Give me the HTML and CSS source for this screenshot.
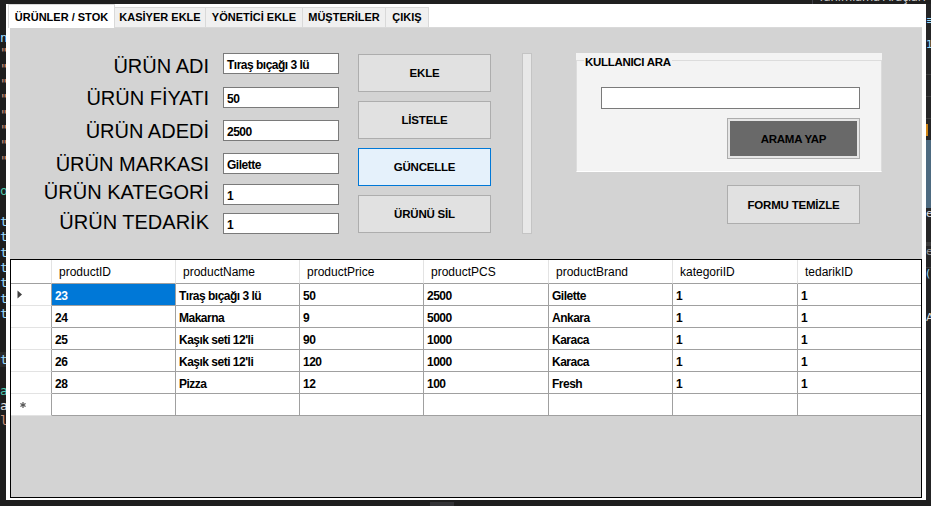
FILE: index.html
```html
<!DOCTYPE html>
<html lang="tr">
<head>
<meta charset="utf-8">
<title>Ürünler / Stok</title>
<link rel="stylesheet" href="styles.css">
</head>
<body>
<div class="screen">
  <div class="topband">
    <div class="tb-gap"></div>
    <div class="tb-sep"></div>
    <span class="vs-title">Tanımlama Araçları</span>
  </div>
  <div class="middle">
    <div class="editor-left">
      <div class="cl c-blue">n</div>
      <div class="cl c-str">"</div>
      <div class="cl c-str">"</div>
      <div class="cl c-str">"</div>
      <div class="cl c-str">"</div>
      <div class="cl c-str">"</div>
      <div class="cl c-str">"</div>
      <div class="cl c-str">"</div>
      <div class="cl c-str">"</div>
      <div class="cl"></div>
      <div class="cl c-teal">o</div>
      <div class="cl"></div>
      <div class="cl c-blue">t</div>
      <div class="cl c-blue">t</div>
      <div class="cl c-blue">t</div>
      <div class="cl c-blue">t</div>
      <div class="cl c-blue">t</div>
      <div class="cl c-blue">t</div>
      <div class="cl c-blue">t</div>
      <div class="cl"></div>
      <div class="cl"></div>
      <div class="cl c-blue cl-band">t</div>
      <div class="cl"></div>
      <div class="cl c-teal">a</div>
      <div class="cl c-white">a</div>
      <div class="cl c-str">l</div>
    </div>

    <div class="window">
      <div class="tabs">
        <div class="tab tab-active">ÜRÜNLER / STOK</div>
        <div class="tab tab-kasiyer">KASİYER EKLE</div>
        <div class="tab tab-yonetici">YÖNETİCİ EKLE</div>
        <div class="tab tab-musteri">MÜŞTERİLER</div>
        <div class="tab tab-cikis">ÇIKIŞ</div>
      </div>

      <div class="panel">
        <div class="form-area">
          <div class="labels">
            <div class="lbl">ÜRÜN ADI</div>
            <div class="lbl">ÜRÜN FİYATI</div>
            <div class="lbl">ÜRÜN ADEDİ</div>
            <div class="lbl">ÜRÜN MARKASI</div>
            <div class="lbl">ÜRÜN KATEGORİ</div>
            <div class="lbl">ÜRÜN TEDARİK</div>
          </div>

          <div class="inputs">
            <div class="tbox">Tıraş bıçağı 3 lü</div>
            <div class="tbox">50</div>
            <div class="tbox">2500</div>
            <div class="tbox">Gilette</div>
            <div class="tbox">1</div>
            <div class="tbox">1</div>
          </div>

          <div class="buttons">
            <div class="btn">EKLE</div>
            <div class="btn">LİSTELE</div>
            <div class="btn btn-focus">GÜNCELLE</div>
            <div class="btn">ÜRÜNÜ SİL</div>
          </div>

          <div class="vbar"></div>

          <div class="right-col">
            <div class="group">
              <div class="frame">
                <div class="legend">KULLANICI ARA</div>
                <div class="search-box"></div>
                <div class="btn-search"><div class="btn-search-inner">ARAMA YAP</div></div>
              </div>
            </div>
            <div class="btn btn-clear">FORMU TEMİZLE</div>
          </div>
        </div>

        <div class="dgv">
          <div class="hc hc-corner"></div>
          <div class="hc">productID</div>
          <div class="hc">productName</div>
          <div class="hc">productPrice</div>
          <div class="hc">productPCS</div>
          <div class="hc">productBrand</div>
          <div class="hc">kategoriID</div>
          <div class="hc">tedarikID</div>

          <div class="rh"><svg class="arrow" width="6" height="9" viewBox="0 0 6 9"><path d="M0.5 0.5 L5 4.5 L0.5 8.5 Z" fill="#404040"/></svg></div>
          <div class="dc dc-sel">23</div>
          <div class="dc">Tıraş bıçağı 3 lü</div>
          <div class="dc">50</div>
          <div class="dc">2500</div>
          <div class="dc">Gilette</div>
          <div class="dc">1</div>
          <div class="dc">1</div>

          <div class="rh"></div>
          <div class="dc">24</div>
          <div class="dc">Makarna</div>
          <div class="dc">9</div>
          <div class="dc">5000</div>
          <div class="dc">Ankara</div>
          <div class="dc">1</div>
          <div class="dc">1</div>

          <div class="rh"></div>
          <div class="dc">25</div>
          <div class="dc">Kaşık seti 12'li</div>
          <div class="dc">90</div>
          <div class="dc">1000</div>
          <div class="dc">Karaca</div>
          <div class="dc">1</div>
          <div class="dc">1</div>

          <div class="rh"></div>
          <div class="dc">26</div>
          <div class="dc">Kaşık seti 12'li</div>
          <div class="dc">120</div>
          <div class="dc">1000</div>
          <div class="dc">Karaca</div>
          <div class="dc">1</div>
          <div class="dc">1</div>

          <div class="rh"></div>
          <div class="dc">28</div>
          <div class="dc">Pizza</div>
          <div class="dc">12</div>
          <div class="dc">100</div>
          <div class="dc">Fresh</div>
          <div class="dc">1</div>
          <div class="dc">1</div>

          <div class="rh rh-new"><svg class="star" width="6" height="6" viewBox="0 0 6 6"><g stroke="#555" stroke-width="1.2"><line x1="3" y1="0" x2="3" y2="6"/><line x1="0.4" y1="1.5" x2="5.6" y2="4.5"/><line x1="0.4" y1="4.5" x2="5.6" y2="1.5"/></g></svg></div>
          <div class="dc"></div>
          <div class="dc"></div>
          <div class="dc"></div>
          <div class="dc"></div>
          <div class="dc"></div>
          <div class="dc"></div>
          <div class="dc"></div>
        </div>
      </div>
    </div>

    <div class="editor-right">
      <div class="er er-15"></div>
      <div class="er er-txt c-blue">≡</div>
      <div class="er er-10"></div>
      <div class="er er-txt c-blue">1</div>
      <div class="er er-line"></div>
      <div class="er er-line"></div>
      <div class="er er-line"></div>
      <div class="er er-orange"></div>
      <div class="er er-slate"></div>
      <div class="er er-txt c-white">e</div>
      <div class="er er-band"></div>
      <div class="er er-txt c-grey">e</div>
      <div class="er er-line2"></div>
      <div class="er er-txt c-blue">(</div>
      <div class="er er-gap"></div>
      <div class="er er-txt c-white">A</div>
    </div>
  </div>
  <div class="bottomband">
    <div class="bb-gap"></div>
    <div class="bb-block"></div>
  </div>
</div>
</body>
</html>
```

FILE: styles.css
```css
* { box-sizing: border-box; }

html, body {
  margin: 0;
  padding: 0;
}

body {
  width: 931px;
  height: 506px;
  overflow: hidden;
  background: #1e1e1e;
  font-family: "Liberation Sans", Arial, sans-serif;
  color: #000;
}

.screen {
  width: 931px;
  height: 506px;
  display: flex;
  flex-direction: column;
}

/* ---------- surrounding IDE ---------- */
.topband {
  height: 4px;
  display: flex;
  overflow: hidden;
  background: #1f1f1f;
}
.tb-gap { width: 812px; flex: none; }
.tb-sep { width: 1px; background: #3f3f46; flex: none; }
.vs-title {
  margin-left: 5px;
  margin-top: -11px;
  font: 12px/15px "Noto Sans", sans-serif;
  color: #cccccc;
  white-space: nowrap;
}

.middle {
  height: 496px;
  display: flex;
}

.editor-left {
  width: 6px;
  flex: none;
  overflow: hidden;
  background: #1e1e1e;
  padding-top: 26px;
  font: 13px/15.33px "DejaVu Sans Mono", monospace;
}
.cl { height: 15.33px; white-space: nowrap; }
.cl-band { background: #2b2b2b; }
.c-blue { color: #9cdcfe; }
.c-str { color: #ce9178; }
.c-teal { color: #4ec9b0; }
.c-white { color: #e0e0e0; }
.c-grey { color: #9a9a9a; }

.editor-right {
  width: 5px;
  flex: none;
  overflow: hidden;
  background: #252526;
  display: flex;
  flex-direction: column;
  font: 11px/12px "DejaVu Sans", sans-serif;
}
.er { flex: none; white-space: nowrap; }
.er-15 { height: 11px; }
.er-10 { height: 10px; }
.er-txt { height: 14px; }
.er-line { height: 22px; border-bottom: 1px solid #3c3c3c; }
.er-orange { height: 12px; border-left: 2px solid #d18616; margin-top: 5px; }
.er-slate { height: 68px; background: #4d6a80; margin-top: 4px; }
.er-band { height: 24px; border-bottom: 4px solid #3a3a3a; }
.er-line2 { height: 8px; border-bottom: 1px solid #3c3c3c; }
.er-gap { height: 30px; }

.bottomband {
  height: 6px;
  display: flex;
  background: #1e1e1e;
}
.bb-gap { width: 430px; }
.bb-block { width: 24px; margin-top: 2px; background: #333336; }

/* ---------- window ---------- */
.window {
  width: 920px;
  flex: none;
  background: #ffffff;
  padding-left: 2px;
  display: flex;
  flex-direction: column;
}

.tabs {
  width: 914px;
  height: 24px;
  display: flex;
  align-items: flex-end;
  border-bottom: 1px solid #d9d9d9;
}

.tab {
  flex: none;
  font-size: 11px;
  font-weight: bold;
  text-align: center;
  white-space: nowrap;
  height: 20px;
  line-height: 19px;
  background: #f0f0f0;
  border-top: 1px solid #d9d9d9;
  border-right: 1px solid #d9d9d9;
}
.tab-active {
  height: 24px;
  margin-bottom: -1px;
  line-height: 22px;
  padding-top: 1px;
  background: #ffffff;
  border-left: 1px solid #d9d9d9;
  width: 107px;
}
.tab-kasiyer { width: 91px; }
.tab-yonetici { width: 97px; }
.tab-musteri { width: 83px; }
.tab-cikis { width: 43px; }

.panel {
  margin-left: 2px;
  width: 912px;
  height: 470px;
  background: #d3d3d3;
  display: flex;
  flex-direction: column;
}

/* ---------- form ---------- */
.form-area {
  height: 231px;
  flex: none;
  display: flex;
  align-items: flex-start;
}

.labels {
  width: 199px;
  margin-top: 27px;
  text-align: right;
  flex: none;
}
.lbl {
  font-size: 20px;
  line-height: 23px;
  height: 23px;
  white-space: nowrap;
}
.lbl:nth-child(2) { margin-top: 9px; }
.lbl:nth-child(3) { margin-top: 10px; }
.lbl:nth-child(4) { margin-top: 10px; }
.lbl:nth-child(5) { margin-top: 5px; }
.lbl:nth-child(6) { margin-top: 7px; }

.inputs {
  width: 116px;
  margin-left: 14px;
  margin-top: 25px;
  flex: none;
}
.tbox {
  height: 21px;
  background: #ffffff;
  border: 1px solid #7a7a7a;
  padding: 2px 0 0 3px;
  font-size: 12px;
  font-weight: bold;
  letter-spacing: -0.5px;
  line-height: 18px;
  white-space: nowrap;
  overflow: hidden;
}
.tbox:nth-child(2) { margin-top: 13px; }
.tbox:nth-child(3) { margin-top: 12px; }
.tbox:nth-child(4) { margin-top: 12px; }
.tbox:nth-child(5) { margin-top: 10px; }
.tbox:nth-child(6) { margin-top: 8px; }

.buttons {
  width: 133px;
  margin-left: 19px;
  margin-top: 26px;
  flex: none;
  display: flex;
  flex-direction: column;
  gap: 9px;
}

.btn {
  height: 38px;
  background: #e1e1e1;
  border: 1px solid #adadad;
  font-size: 11.5px;
  font-weight: bold;
  letter-spacing: -0.2px;
  display: flex;
  align-items: center;
  justify-content: center;
  white-space: nowrap;
}
.btn-focus {
  background: #e5f1fb;
  border-color: #0078d7;
}

.vbar {
  width: 10px;
  height: 181px;
  margin-left: 31px;
  margin-top: 25px;
  flex: none;
  background: #e8e8e8;
  border: 1px solid #c4c4c4;
}

.right-col {
  width: 306px;
  margin-left: 44px;
  margin-top: 25px;
  flex: none;
}

.group {
  height: 119px;
  background: #f3f3f3;
  padding-top: 7px;
}
.frame {
  height: 112px;
  border: 1px solid #dcdcdc;
  border-bottom-color: #ffffff;
}
.legend {
  width: fit-content;
  margin-left: 7px;
  margin-top: -5px;
  padding: 0 1px;
  background: #f3f3f3;
  font-size: 11.5px;
  font-weight: bold;
  letter-spacing: -0.3px;
  line-height: 13px;
  white-space: nowrap;
}
.search-box {
  width: 259px;
  height: 22px;
  margin-left: 24px;
  margin-top: 18px;
  background: #ffffff;
  border: 1px solid #7a7a7a;
}
.btn-search {
  width: 133px;
  height: 41px;
  margin-left: 150px;
  margin-top: 9px;
  border: 1px solid #adadad;
  background: #e6e6e6;
  padding: 2px;
}
.btn-search-inner {
  height: 100%;
  background: #696969;
  font-size: 11.5px;
  font-weight: bold;
  letter-spacing: -0.3px;
  display: flex;
  align-items: center;
  justify-content: center;
}

.btn-clear {
  width: 133px;
  height: 39px;
  margin-left: 151px;
  margin-top: 13px;
}

/* ---------- data grid ---------- */
.dgv {
  height: 239px;
  flex: none;
  border: 1px solid #000000;
  background: #d3d3d3;
  display: grid;
  grid-template-columns: 41px 124px 124px 124px 125px 124px 125px 123px;
  grid-template-rows: 24px;
  grid-auto-rows: 22px;
  align-content: start;
}

.hc {
  background: #ffffff;
  border-right: 1px solid #e3e3e3;
  border-bottom: 1px solid #a0a0a0;
  font-size: 12px;
  line-height: 22px;
  padding: 1px 0 0 7px;
  white-space: nowrap;
}
.hc:nth-child(8n) { border-right: none; }

.rh {
  background: #ffffff;
  border-right: 1px solid #a0a0a0;
  border-bottom: 1px solid #e3e3e3;
  display: flex;
  align-items: center;
  padding-left: 6px;
}
.rh-new { padding-left: 9px; }

.dc {
  background: #ffffff;
  border-right: 1px solid #a0a0a0;
  border-bottom: 1px solid #a0a0a0;
  font-size: 12px;
  font-weight: bold;
  letter-spacing: -0.5px;
  line-height: 18px;
  padding: 3px 0 0 3px;
  white-space: nowrap;
  overflow: hidden;
}
.dc:nth-child(8n) { border-right: none; }
.dc-sel {
  background: #0078d7;
  color: #ffffff;
}

.arrow, .star { display: block; }
```
